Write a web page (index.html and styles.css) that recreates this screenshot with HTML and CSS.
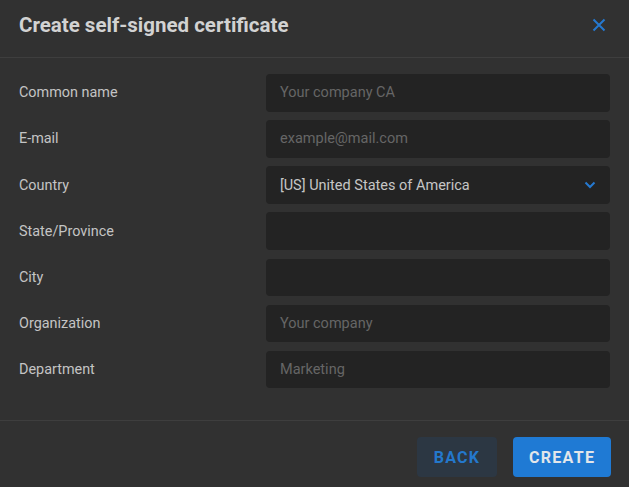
FILE: index.html
```html
<!DOCTYPE html>
<html>
<head>
<meta charset="utf-8">
<link rel="stylesheet" href="styles.css">
</head>
<body>
<div class="dialog">
  <header class="header">
    <h1 class="title">Create self-signed certificate</h1>
    <button class="close" aria-label="Close">
      <svg width="14" height="14" viewBox="0 0 14 14"><path d="M1.5 1.5 L12.5 12.5 M12.5 1.5 L1.5 12.5" stroke="#2579d0" stroke-width="2" fill="none"/></svg>
    </button>
  </header>
  <div class="body">
    <div class="row"><label class="label">Common name</label><div class="field placeholder">Your company CA</div></div>
    <div class="row"><label class="label">E-mail</label><div class="field placeholder">example@mail.com</div></div>
    <div class="row"><label class="label">Country</label><div class="field select"><span>[US] United States of America</span>
      <svg width="12" height="8" viewBox="0 0 12 8"><path d="M1.5 1.5 L6 6 L10.5 1.5" stroke="#2579d0" stroke-width="2" fill="none"/></svg></div></div>
    <div class="row"><label class="label">State/Province</label><div class="field"></div></div>
    <div class="row"><label class="label">City</label><div class="field"></div></div>
    <div class="row"><label class="label">Organization</label><div class="field placeholder">Your company</div></div>
    <div class="row"><label class="label">Department</label><div class="field placeholder">Marketing</div></div>
  </div>
  <footer class="footer">
    <button class="btn btn-back">BACK</button>
    <button class="btn btn-create">CREATE</button>
  </footer>
</div>
</body>
</html>
```
FILE: styles.css
```css
html, body {
  margin: 0;
  padding: 0;
  background: #313131;
  font-family: Roboto, "Liberation Sans", sans-serif;
}
.dialog {
  width: 629px;
  height: 487px;
  background: #313131;
  display: flex;
  flex-direction: column;
}
.header {
  height: 58px;
  box-sizing: border-box;
  border-bottom: 1px solid #3e3e3e;
  display: flex;
  align-items: center;
  justify-content: space-between;
  padding: 0 19px 8px 19px;
}
.title {
  margin: 0;
  font-size: 20.5px;
  font-weight: 700;
  color: #d2d2d2;
}
.close {
  background: none;
  border: 0;
  padding: 0;
  width: 14px;
  height: 14px;
  display: flex;
  margin-right: 4px;
}
.body {
  padding: 16px 19px 0 19px;
  display: flex;
  flex-direction: column;
  gap: 8.67px;
  height: 363px;
  box-sizing: border-box;
  border-bottom: 1px solid #3e3e3e;
}
.row {
  display: grid;
  grid-template-columns: 247px 1fr;
  align-items: center;
  height: 37.5px;
}
.label {
  font-size: 14.4px;
  color: #c4c4c4;
}
.field {
  height: 37.5px;
  background: #232323;
  border-radius: 4px;
  box-sizing: border-box;
  padding: 0 14px;
  display: flex;
  align-items: center;
  font-size: 14.5px;
  color: #c6c6c6;
}
.placeholder {
  color: #666666;
}
.select {
  justify-content: space-between;
  padding-right: 14px;
}
.footer {
  display: flex;
  justify-content: flex-end;
  gap: 16px;
  padding: 16px 18px 0 0;
}
.btn {
  height: 40px;
  border: 0;
  border-radius: 4px;
  font-family: Roboto, "Liberation Sans", sans-serif;
  font-size: 16px;
  font-weight: 700;
  letter-spacing: 1.3px;
  padding: 0 16px;
}
.btn-back {
  width: 80px;
  background: #2c3743;
  color: #2478cc;
}
.btn-create {
  width: 98px;
  background: #1f7ad4;
  color: #e2e6ea;
}
```
